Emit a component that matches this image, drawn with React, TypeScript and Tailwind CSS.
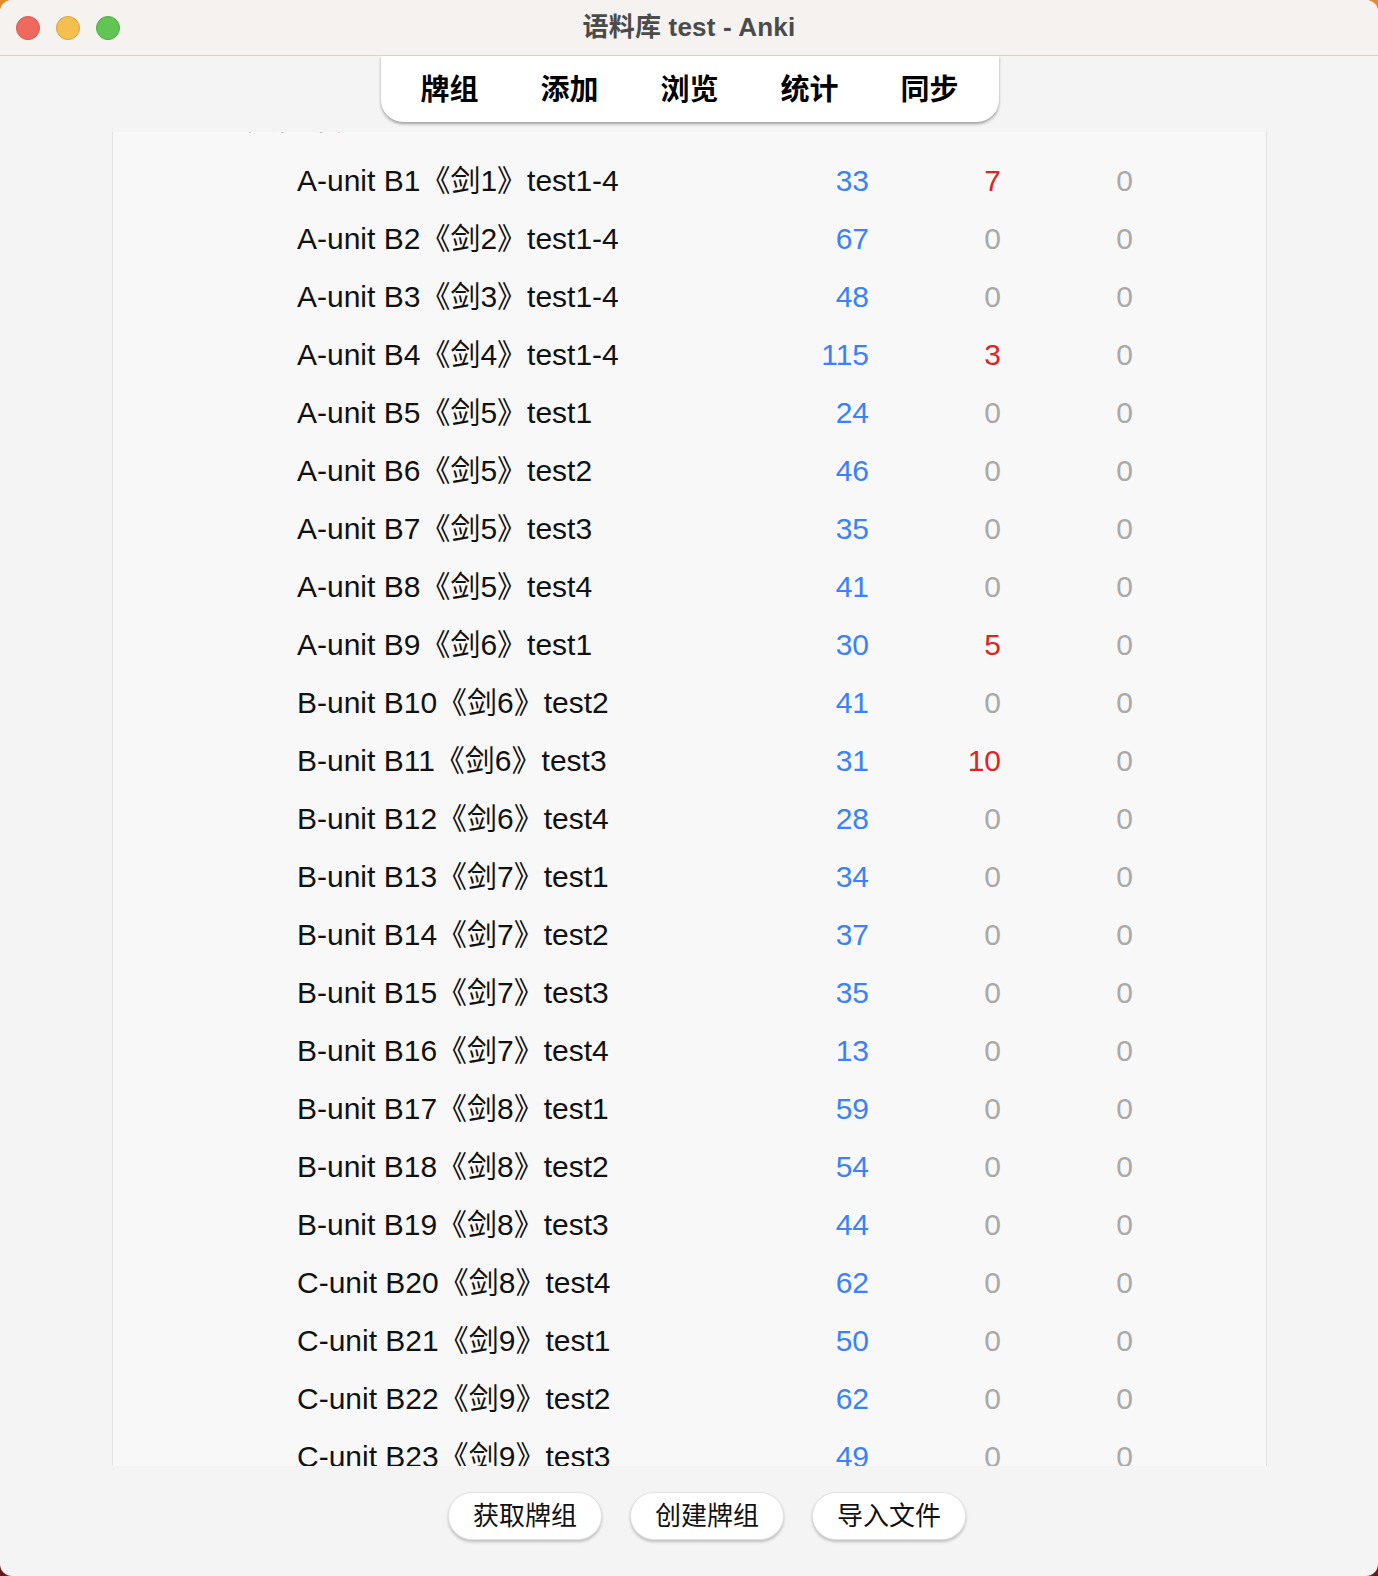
const font = { fontFamily: '"Liberation Sans", "Noto Sans CJK SC", sans-serif' };

type Deck = { name: string; n: string; l: string; r: string };

const decks: Deck[] = [
  { name: "A-unit B1《剑1》test1-4", n: "33", l: "7", r: "0" },
  { name: "A-unit B2《剑2》test1-4", n: "67", l: "0", r: "0" },
  { name: "A-unit B3《剑3》test1-4", n: "48", l: "0", r: "0" },
  { name: "A-unit B4《剑4》test1-4", n: "115", l: "3", r: "0" },
  { name: "A-unit B5《剑5》test1", n: "24", l: "0", r: "0" },
  { name: "A-unit B6《剑5》test2", n: "46", l: "0", r: "0" },
  { name: "A-unit B7《剑5》test3", n: "35", l: "0", r: "0" },
  { name: "A-unit B8《剑5》test4", n: "41", l: "0", r: "0" },
  { name: "A-unit B9《剑6》test1", n: "30", l: "5", r: "0" },
  { name: "B-unit B10《剑6》test2", n: "41", l: "0", r: "0" },
  { name: "B-unit B11《剑6》test3", n: "31", l: "10", r: "0" },
  { name: "B-unit B12《剑6》test4", n: "28", l: "0", r: "0" },
  { name: "B-unit B13《剑7》test1", n: "34", l: "0", r: "0" },
  { name: "B-unit B14《剑7》test2", n: "37", l: "0", r: "0" },
  { name: "B-unit B15《剑7》test3", n: "35", l: "0", r: "0" },
  { name: "B-unit B16《剑7》test4", n: "13", l: "0", r: "0" },
  { name: "B-unit B17《剑8》test1", n: "59", l: "0", r: "0" },
  { name: "B-unit B18《剑8》test2", n: "54", l: "0", r: "0" },
  { name: "B-unit B19《剑8》test3", n: "44", l: "0", r: "0" },
  { name: "C-unit B20《剑8》test4", n: "62", l: "0", r: "0" },
  { name: "C-unit B21《剑9》test1", n: "50", l: "0", r: "0" },
  { name: "C-unit B22《剑9》test2", n: "62", l: "0", r: "0" },
  { name: "C-unit B23《剑9》test3", n: "49", l: "0", r: "0" },
];

const tabs = ["牌组", "添加", "浏览", "统计", "同步"];
const buttons = ["获取牌组", "创建牌组", "导入文件"];

const Count = ({ v, kind, w }: { v: string; kind: "new" | "learn" | "review"; w: string }) => {
  let color = "text-[#a9a9a9]";
  if (v !== "0") {
    color = kind === "new" ? "text-[#3b82f6]" : kind === "learn" ? "text-[#dc2626]" : "text-[#16a34a]";
  }
  return <div className={`${w} shrink-0 text-right ${color}`}>{v}</div>;
};

export default function App() {
  return (
    <div
      className="w-[1378px] h-[1576px] bg-[linear-gradient(180deg,#e48a2c_0%,#9b3a22_40%,#6a1919_100%)]"
      style={font}
    >
      <div className="w-full h-full rounded-[12px] overflow-hidden flex flex-col bg-[#f4f4f4]">
        {/* title bar */}
        <div className="relative h-[56px] shrink-0 bg-[#f6f2ef] border-b border-[#d6d3d1] flex items-center justify-center">
          <div className="absolute left-[16px] top-[16px] flex gap-[16px]">
            <div className="w-[24px] h-[24px] rounded-full bg-[#ee6a5f] border border-[#d8564b]" />
            <div className="w-[24px] h-[24px] rounded-full bg-[#f5bf4f] border border-[#d9a23c]" />
            <div className="w-[24px] h-[24px] rounded-full bg-[#61c554] border border-[#4faa43]" />
          </div>
          <span className="text-[26px] font-bold text-[#4b4b4b] tracking-[0.2px]">语料库 test - Anki</span>
        </div>

        {/* toolbar */}
        <div className="relative z-10 flex justify-center shrink-0">
          <div className="h-[66px] px-[9px] pt-[4px] bg-white rounded-b-[22px] shadow-[0_2px_3px_rgba(0,0,0,0.35)] flex items-center ml-[1px]">
            {tabs.map((t) => (
              <div key={t} className="w-[120px] text-center text-[29px] font-bold text-black">
                {t}
              </div>
            ))}
          </div>
        </div>

        {/* deck list */}
        <div className="mt-[10px] mx-[112px] w-[1155px] h-[1334px] shrink-0 overflow-hidden bg-[#f8f8f8] border-x border-[#e3e3e3]">
          <div className="-mt-[39px]">
            <div className="h-[58px] flex items-center text-[30px] text-[#111] -translate-y-[4px]">
              <div className="w-[656px] pl-[133px] shrink-0">预备单元</div>
              <Count v="" kind="new" w="w-[100px]" />
              <Count v="25" kind="learn" w="w-[132px]" />
              <Count v="0" kind="review" w="w-[132px]" />
            </div>
            {decks.map((d) => (
              <div key={d.name} className="h-[58px] flex items-center text-[30px] text-[#111]">
                <div className="w-[656px] pl-[184px] shrink-0 whitespace-nowrap">{d.name}</div>
                <Count v={d.n} kind="new" w="w-[100px]" />
                <Count v={d.l} kind="learn" w="w-[132px]" />
                <Count v={d.r} kind="review" w="w-[132px]" />
              </div>
            ))}
          </div>
        </div>

        {/* bottom buttons */}
        <div className="flex-1 flex justify-center items-start pt-[26px] pl-[36px] gap-[28px]">
          {buttons.map((b) => (
            <div
              key={b}
              className="h-[48px] w-[154px] rounded-full bg-white border border-[#e2e2e2] shadow-[0_2px_3px_rgba(0,0,0,0.22)] flex items-center justify-center text-[26px] leading-[30px] text-[#111]"
            >
              {b}
            </div>
          ))}
        </div>
      </div>
    </div>
  );
}
